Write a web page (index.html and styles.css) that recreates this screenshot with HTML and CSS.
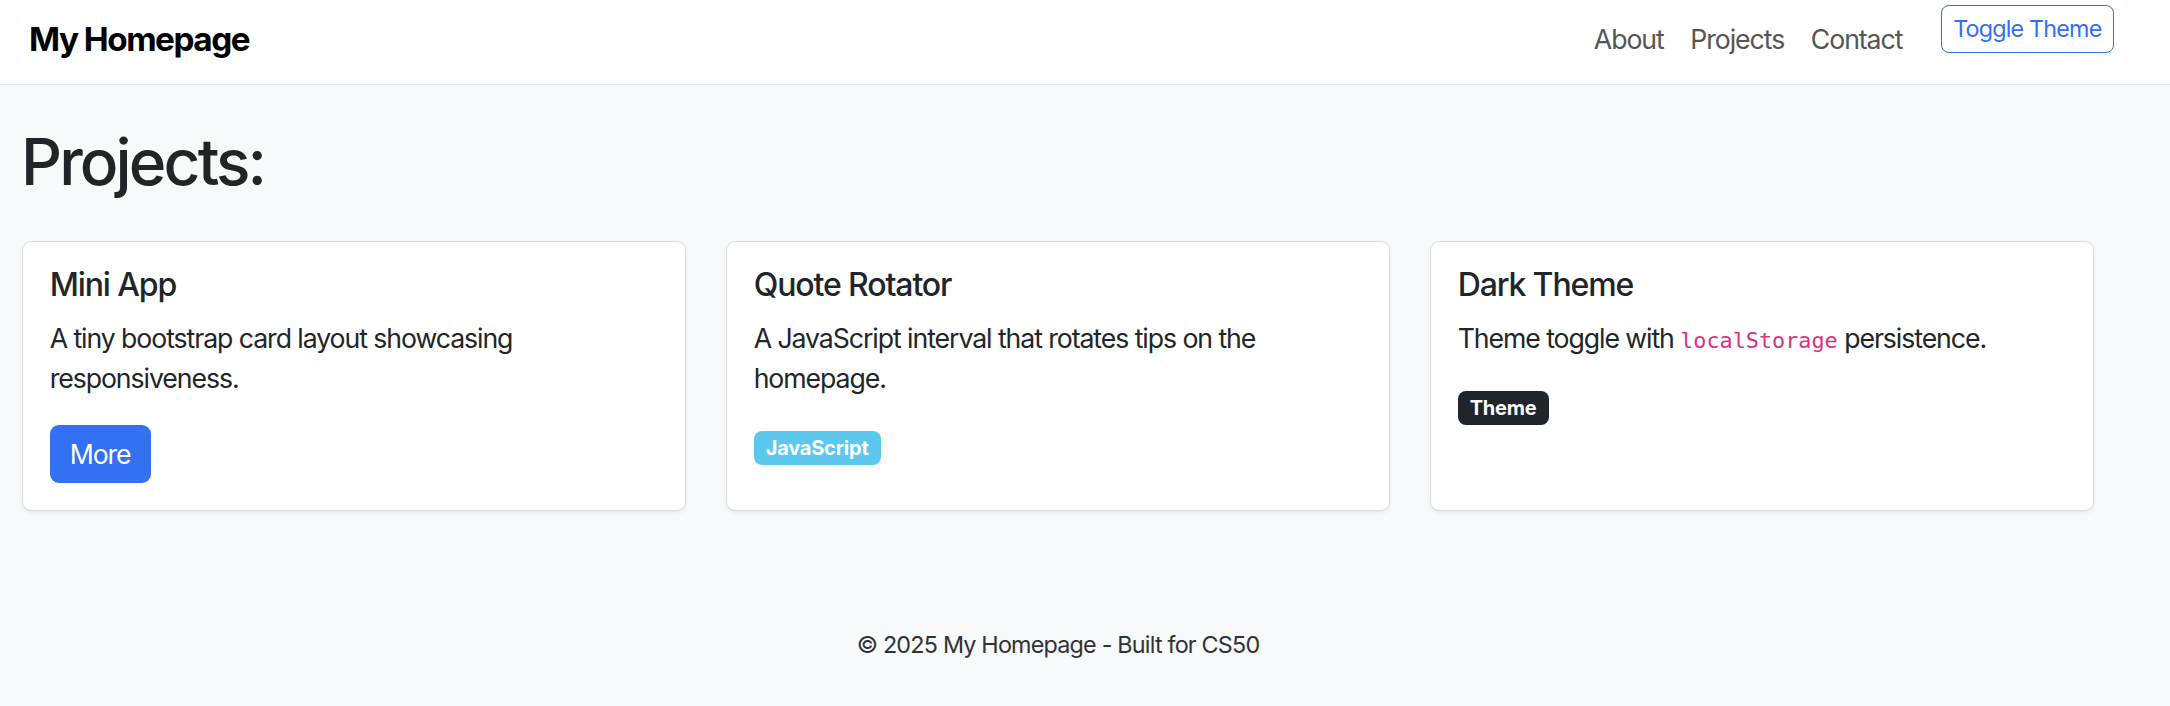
FILE: index.html
```html
<!DOCTYPE html>
<html lang="en">
<head>
<meta charset="utf-8">
<title>My Homepage</title>
<link rel="stylesheet" href="styles.css">
</head>
<body>
<header class="navbar">
  <a class="brand" href="#">My Homepage</a>
  <nav class="nav">
    <a class="nav-link" href="#">About</a>
    <a class="nav-link" href="#">Projects</a>
    <a class="nav-link" href="#">Contact</a>
  </nav>
  <button class="btn-toggle" type="button">Toggle Theme</button>
</header>

<main class="main">
  <h1 class="page-title">Projects:</h1>
  <div class="cards">
    <div class="card">
      <h5 class="card-title">Mini App</h5>
      <p class="card-text">A tiny bootstrap card layout showcasing responsiveness.</p>
      <div><a class="btn-primary" href="#">More</a></div>
    </div>
    <div class="card">
      <h5 class="card-title">Quote Rotator</h5>
      <p class="card-text">A JavaScript interval that rotates tips on the homepage.</p>
      <div class="badge-row"><span class="badge badge-info">JavaScript</span></div>
    </div>
    <div class="card">
      <h5 class="card-title">Dark Theme</h5>
      <p class="card-text">Theme toggle with <code class="code">localStorage</code> persistence.</p>
      <div class="badge-row"><span class="badge badge-dark">Theme</span></div>
    </div>
  </div>
</main>

<footer class="footer">
  <p class="footer-text">© 2025 My Homepage - Built for CS50</p>
</footer>
</body>
</html>
```

FILE: styles.css
```css
* { box-sizing: border-box; }

html, body {
  margin: 0;
  padding: 0;
}

body {
  background: #f8f9fa;
  color: #212529;
  font-family: Inter, "Liberation Sans", sans-serif;
  font-size: 26.67px;
  line-height: 40px;
  letter-spacing: -0.04em;
}

a { text-decoration: none; }

/* Navbar */
.navbar {
  display: flex;
  align-items: center;
  height: 85px;
  padding: 0 56px 6px 29px;
  background: #fff;
  border-bottom: 1px solid #dfe2e6;
}

.brand {
  font-size: 33.33px;
  font-weight: 700;
  line-height: 40px;
  color: #000;
  letter-spacing: -0.045em;
}

.nav {
  display: flex;
  margin-left: auto;
}

.nav-link {
  padding: 0 13.33px;
  color: #555;
  font-size: 26.67px;
  line-height: 40px;
  letter-spacing: -0.04em;
}

.btn-toggle {
  align-self: flex-start;
  margin-top: 5px;
  margin-left: 25px;
  height: 48px;
  padding: 0 11.5px;
  font-family: Inter, "Liberation Sans", sans-serif;
  font-size: 23.33px;
  line-height: 46px;
  letter-spacing: -0.035em;
  color: #3470ee;
  background: #fff;
  border: 1.5px solid #3470ee;
  border-radius: 8px;
}

/* Main */
.main {
  padding: 37px 76px 0 22px;
}

.page-title {
  margin: 0 0 39px -1px;
  font-size: 64px;
  font-weight: 500;
  line-height: 80px;
  letter-spacing: -0.045em;
}

.cards {
  display: grid;
  grid-template-columns: repeat(3, 1fr);
  gap: 40px;
}

.card {
  background: #fff;
  border: 1px solid #d9dcdf;
  border-radius: 9px;
  box-shadow: 0 2px 4px rgba(0, 0, 0, 0.06);
  padding: 23px 26.67px 26.67px;
}

.card-title {
  margin: 0 0 13.33px;
  font-size: 32px;
  font-weight: 500;
  line-height: 40px;
  letter-spacing: -0.035em;
}

.card-text {
  margin: 0 0 26.67px;
}

.btn-primary {
  display: inline-block;
  padding: 9px 20px;
  line-height: 40px;
  color: #fff;
  background: #3370f2;
  border-radius: 9px;
}

.badge {
  display: inline-block;
  padding: 7px 12px;
  font-size: 20px;
  font-weight: 700;
  line-height: 20px;
  letter-spacing: -0.01em;
  color: #fff;
  border-radius: 8px;
  vertical-align: middle;
}

.badge-info { background: #5cc8ee; }
.badge-dark { background: #212529; }

.code {
  font-family: "DejaVu Sans Mono", "Liberation Mono", monospace;
  font-size: 21.8px;
  line-height: 1;
  letter-spacing: 0;
  color: #d63384;
}

/* Footer */
.footer {
  padding: 40px 76px 40px 22px;
  margin-top: 74px;
  text-align: center;
}

.footer-text {
  margin: 0;
  font-size: 23.33px;
  letter-spacing: -0.034em;
  color: #2f3337;
}
```
